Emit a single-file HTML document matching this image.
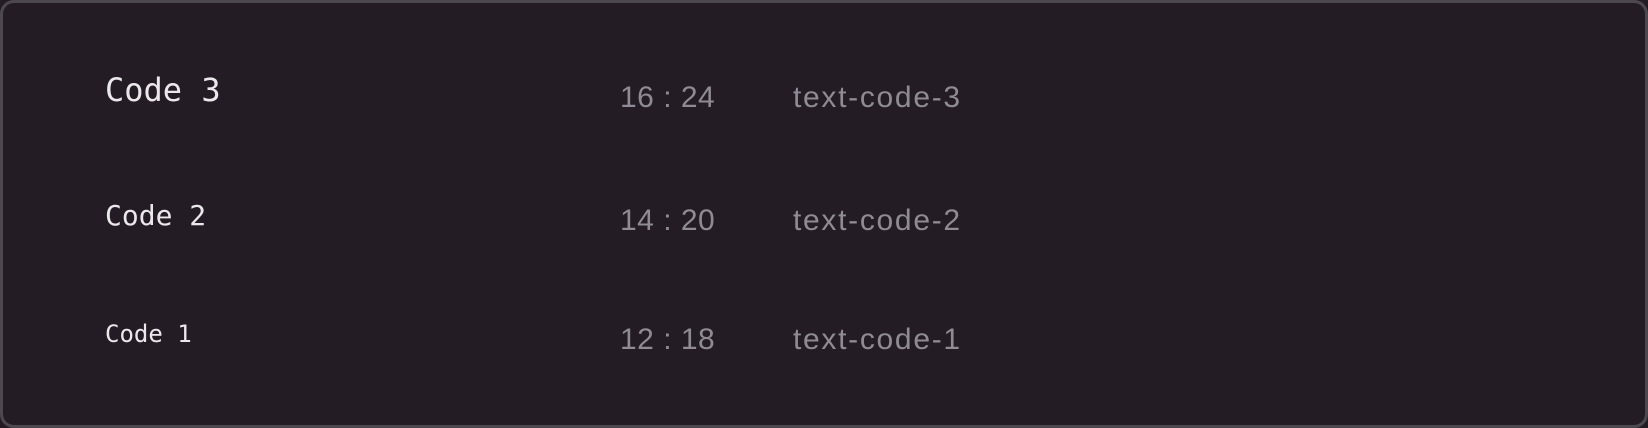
<!DOCTYPE html>
<html><head><meta charset="utf-8"><style>
html,body{margin:0;padding:0;width:1648px;height:428px;background:#241c24;overflow:hidden}
.card{position:absolute;left:0;top:0;width:1642px;height:422px;border:3px solid #4d4750;border-radius:14px;background:#241c24}
.t{position:absolute;line-height:1;white-space:pre;margin:0}
.m{font-family:"DejaVu Sans Mono","Liberation Mono",monospace;color:#ebe7ec;left:105px}
.s{font-family:"Liberation Sans",sans-serif;color:#8f8a93;font-size:30px}
.n{left:620px;letter-spacing:0.5px}
.k{left:793px;letter-spacing:1.7px}
</style></head><body>
<div class="card"></div>
<div class="t m" style="font-size:32px;top:74px">Code 3</div>
<div class="t s n" style="top:82.6px">16 : 24</div>
<div class="t s k" style="top:82.6px">text-code-3</div>
<div class="t m" style="font-size:28px;top:202.3px">Code 2</div>
<div class="t s n" style="top:205.6px">14 : 20</div>
<div class="t s k" style="top:205.6px">text-code-2</div>
<div class="t m" style="font-size:24px;top:321.7px">Code 1</div>
<div class="t s n" style="top:324.6px">12 : 18</div>
<div class="t s k" style="top:324.6px">text-code-1</div>
</body></html>
